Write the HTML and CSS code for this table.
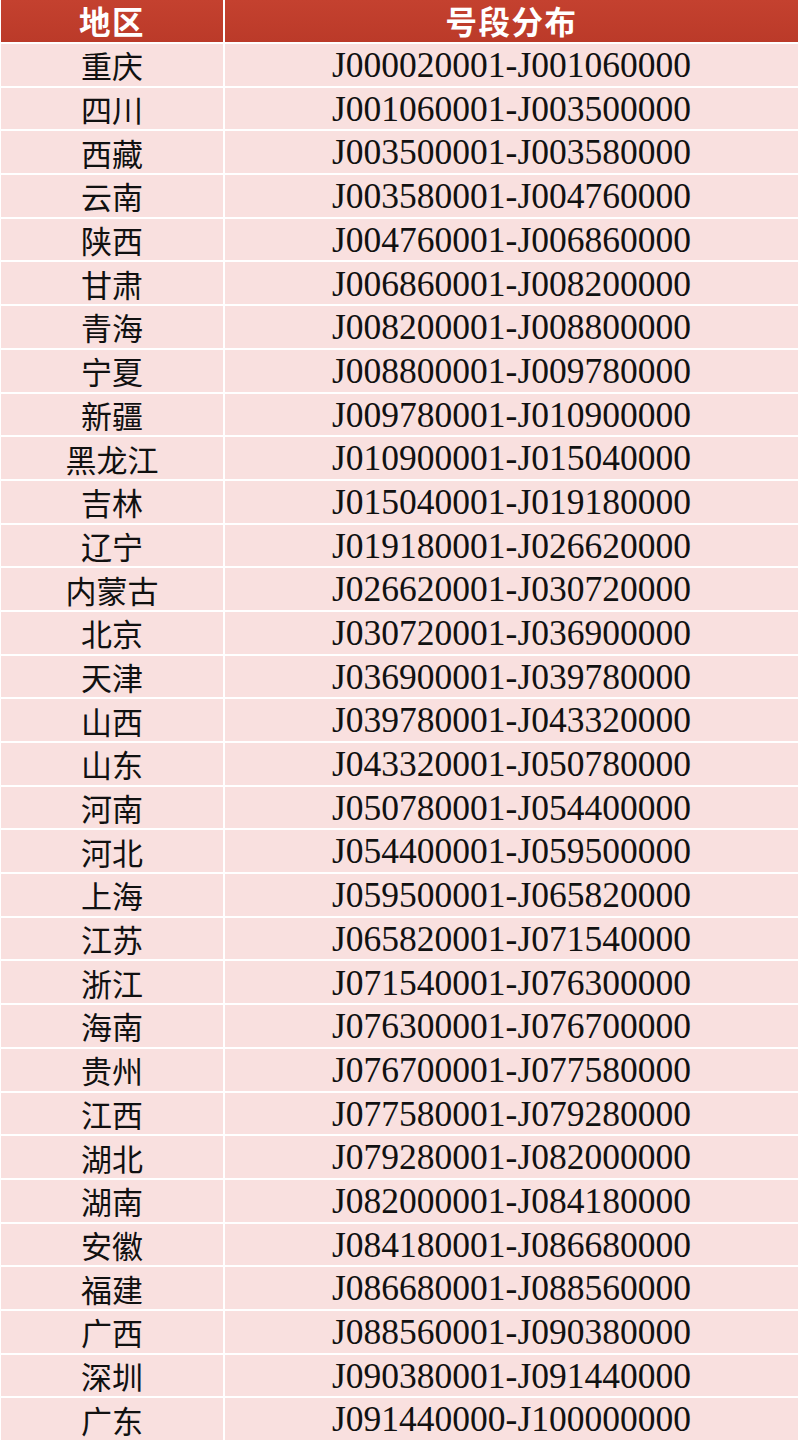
FILE: index.html
```html
<!DOCTYPE html>
<html lang="zh">
<head>
<meta charset="utf-8">
<title>号段分布</title>
<link rel="stylesheet" href="styles.css">
</head>
<body>
<div class="table">
  <div class="cell head">地区</div><div class="cell head">号段分布</div>
  <div class="cell area">重庆</div><div class="cell num">J000020001-J001060000</div>
  <div class="cell area">四川</div><div class="cell num">J001060001-J003500000</div>
  <div class="cell area">西藏</div><div class="cell num">J003500001-J003580000</div>
  <div class="cell area">云南</div><div class="cell num">J003580001-J004760000</div>
  <div class="cell area">陕西</div><div class="cell num">J004760001-J006860000</div>
  <div class="cell area">甘肃</div><div class="cell num">J006860001-J008200000</div>
  <div class="cell area">青海</div><div class="cell num">J008200001-J008800000</div>
  <div class="cell area">宁夏</div><div class="cell num">J008800001-J009780000</div>
  <div class="cell area">新疆</div><div class="cell num">J009780001-J010900000</div>
  <div class="cell area">黑龙江</div><div class="cell num">J010900001-J015040000</div>
  <div class="cell area">吉林</div><div class="cell num">J015040001-J019180000</div>
  <div class="cell area">辽宁</div><div class="cell num">J019180001-J026620000</div>
  <div class="cell area">内蒙古</div><div class="cell num">J026620001-J030720000</div>
  <div class="cell area">北京</div><div class="cell num">J030720001-J036900000</div>
  <div class="cell area">天津</div><div class="cell num">J036900001-J039780000</div>
  <div class="cell area">山西</div><div class="cell num">J039780001-J043320000</div>
  <div class="cell area">山东</div><div class="cell num">J043320001-J050780000</div>
  <div class="cell area">河南</div><div class="cell num">J050780001-J054400000</div>
  <div class="cell area">河北</div><div class="cell num">J054400001-J059500000</div>
  <div class="cell area">上海</div><div class="cell num">J059500001-J065820000</div>
  <div class="cell area">江苏</div><div class="cell num">J065820001-J071540000</div>
  <div class="cell area">浙江</div><div class="cell num">J071540001-J076300000</div>
  <div class="cell area">海南</div><div class="cell num">J076300001-J076700000</div>
  <div class="cell area">贵州</div><div class="cell num">J076700001-J077580000</div>
  <div class="cell area">江西</div><div class="cell num">J077580001-J079280000</div>
  <div class="cell area">湖北</div><div class="cell num">J079280001-J082000000</div>
  <div class="cell area">湖南</div><div class="cell num">J082000001-J084180000</div>
  <div class="cell area">安徽</div><div class="cell num">J084180001-J086680000</div>
  <div class="cell area">福建</div><div class="cell num">J086680001-J088560000</div>
  <div class="cell area">广西</div><div class="cell num">J088560001-J090380000</div>
  <div class="cell area">深圳</div><div class="cell num">J090380001-J091440000</div>
  <div class="cell area">广东</div><div class="cell num">J091440000-J100000000</div>
</div>
</body>
</html>
```

FILE: styles.css
```css
html, body {
  margin: 0;
  padding: 0;
  background: #ffffff;
}
.table {
  width: 800px;
  height: 1440px;
  box-sizing: border-box;
  padding: 0 2px 0 1px;
  display: grid;
  grid-template-columns: 222px 1fr;
  grid-template-rows: 42px repeat(32, 1fr);
  gap: 2px;
  background: #ffffff;
}
.cell {
  display: flex;
  align-items: center;
  justify-content: center;
  background: #f9e0df;
  color: #111111;
  white-space: nowrap;
}
.head {
  background: linear-gradient(#c4412f, #bb3a29);
  color: #ffffff;
  font-family: "Noto Sans CJK SC", sans-serif;
  font-weight: 700;
  font-size: 31.5px;
  letter-spacing: 1.5px;
  line-height: 1;
}
.area {
  font-family: "Noto Sans CJK SC", sans-serif;
  font-size: 31px;
  font-weight: 400;
  line-height: 1;
}
.num {
  font-family: "Liberation Serif", serif;
  font-size: 35.5px;
  line-height: 1;
  padding-top: 2px;
}
```
